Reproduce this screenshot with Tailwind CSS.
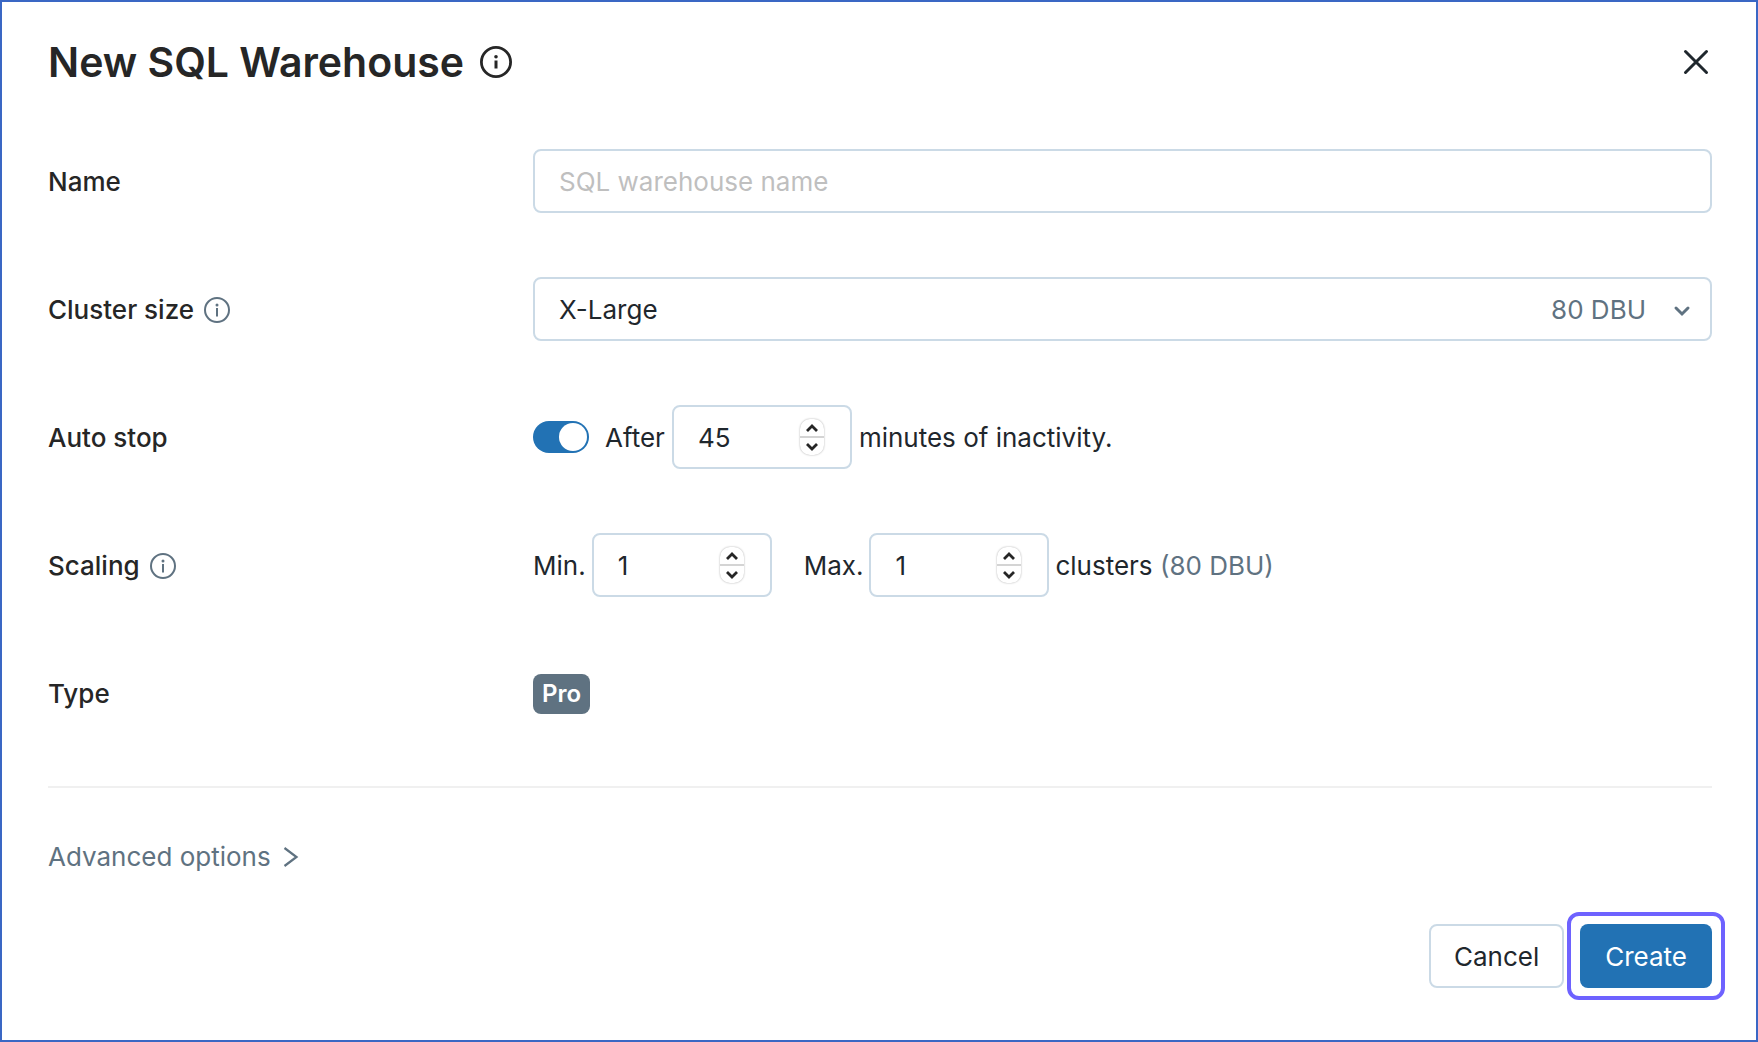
<!DOCTYPE html>
<html lang="en">
<head>
    <meta charset="utf-8">
    <meta name="viewport" content="width=device-width, initial-scale=1">
    <title>New SQL Warehouse</title>
    <script src="https://cdn.jsdelivr.net/npm/@tailwindcss/browser@4"></script>
</head>
<body class="bg-white font-['Inter',sans-serif] text-[26px] leading-10 text-[#1f272d]">
<main class="min-h-screen border-2 border-[#3a67c4] pt-8 pr-11 pb-[52px] pl-[46px]">
    <!-- Header -->
    <header class="flex items-center justify-between">
        <div class="flex items-center gap-4">
            <h1 class="text-[41px] leading-14 font-semibold text-[#262626]">New SQL Warehouse</h1>
            <button type="button" aria-label="About SQL warehouses" class="text-[#262626]">
                <svg class="size-8" viewBox="0 0 32 32" fill="none" stroke="currentColor">
                    <circle cx="16" cy="16" r="14.6" stroke-width="2.8"/>
                    <path d="M16 14.5v8" stroke-width="3"/>
                    <circle cx="16" cy="10.7" r="1.8" fill="currentColor" stroke="none"/>
                </svg>
            </button>
        </div>
        <button type="button" aria-label="Close">
            <svg class="size-8" viewBox="0 0 32 32" fill="none" stroke="currentColor" stroke-width="3" stroke-linecap="round">
                <path d="M5.500 5.500l21 21M26.500 5.500l-21 21"/>
            </svg>
        </button>
    </header>

    <form>
        <div class="mt-[59px] grid gap-16">
            <!-- Name -->
            <div class="grid h-16 grid-cols-[485px_1fr] items-center">
                <label for="name" class="pt-0.5 font-medium text-[#262626]">Name</label>
                <input id="name" type="text" placeholder="SQL warehouse name" class="h-16 w-full rounded-lg border-2 border-[#cbdae6] px-6 placeholder:text-[#bfbfbf]">
            </div>

            <!-- Cluster size -->
            <div class="grid h-16 grid-cols-[485px_1fr] items-center">
                <div class="flex items-center gap-2.5 pt-0.5">
                    <label for="size" class="font-medium text-[#262626]">Cluster size</label>
                    <button type="button" aria-label="About cluster size" class="text-[#5f7281]">
                        <svg class="size-[26px]" viewBox="0 0 26 26" fill="none" stroke="currentColor" stroke-width="2">
                            <circle cx="13" cy="13" r="12"/>
                            <path d="M13 11v8.500"/>
                            <circle cx="13" cy="8" r="1.500" fill="currentColor" stroke="none"/>
                        </svg>
                    </button>
                </div>
                <div class="relative">
                    <select id="size" class="block h-16 w-full appearance-none rounded-lg border-2 border-[#cbdae6] bg-white px-6 pt-0.5">
                        <option>X-Large</option>
                    </select>
                    <div class="pointer-events-none absolute inset-y-0 right-5 flex items-center gap-[26px] pt-0.5 text-[#5f7281]">
                        <span>80 DBU</span>
                        <svg class="size-5" viewBox="0 0 20 20" fill="none" stroke="currentColor" stroke-width="3" stroke-linecap="round">
                            <path d="M4 8l6 6 6-6"/>
                        </svg>
                    </div>
                </div>
            </div>

            <!-- Auto stop -->
            <div class="grid h-16 grid-cols-[485px_1fr] items-center">
                <label for="autostop" class="pt-0.5 font-medium text-[#262626]">Auto stop</label>
                <div class="flex items-center">
                    <input id="autostop" type="checkbox" role="switch" checked class="mr-4 flex h-8 w-14 appearance-none items-center justify-start rounded-full bg-[#8396a5] p-0.5 before:size-7 before:rounded-full before:bg-white checked:justify-end checked:bg-[#2272b4]">
                    <label for="minutes" class="pt-0.5">After</label>
                    <div class="relative mx-[7px]">
                        <input id="minutes" type="number" value="45" class="block h-16 w-[180px] appearance-none rounded-lg border-2 border-[#cbdae6] pr-14 pl-6 [-moz-appearance:textfield] [&::-webkit-inner-spin-button]:appearance-none">
                        <div class="absolute inset-y-0 right-7 flex items-center">
                            <div class="grid h-9 w-6 divide-y-2 divide-[#d4d4d4] rounded-[10px] bg-white text-[#262626] shadow-[0_0_2px_rgba(0,0,0,0.35)]">
                                <button type="button" aria-label="More minutes" class="flex items-center justify-center">
                                    <svg class="h-2 w-3" viewBox="0 0 12 8" fill="none" stroke="currentColor" stroke-width="2.800"><path d="M1 7l5-5 5 5"/></svg>
                                </button>
                                <button type="button" aria-label="Fewer minutes" class="flex items-center justify-center">
                                    <svg class="h-2 w-3" viewBox="0 0 12 8" fill="none" stroke="currentColor" stroke-width="2.800"><path d="M1 1l5 5 5-5"/></svg>
                                </button>
                            </div>
                        </div>
                    </div>
                    <span class="pt-0.5">minutes of inactivity.</span>
                </div>
            </div>

            <!-- Scaling -->
            <div class="grid h-16 grid-cols-[485px_1fr] items-center">
                <div class="flex items-center gap-2.5 pt-0.5">
                    <span class="font-medium text-[#262626]">Scaling</span>
                    <button type="button" aria-label="About scaling" class="text-[#5f7281]">
                        <svg class="size-[26px]" viewBox="0 0 26 26" fill="none" stroke="currentColor" stroke-width="2">
                            <circle cx="13" cy="13" r="12"/>
                            <path d="M13 11v8.500"/>
                            <circle cx="13" cy="8" r="1.500" fill="currentColor" stroke="none"/>
                        </svg>
                    </button>
                </div>
                <div class="flex items-center gap-1.5">
                    <label for="min" class="pt-0.5">Min.</label>
                    <div class="relative">
                        <input id="min" type="number" value="1" class="block h-16 w-[180px] appearance-none rounded-lg border-2 border-[#cbdae6] pr-14 pl-6 [-moz-appearance:textfield] [&::-webkit-inner-spin-button]:appearance-none">
                        <div class="absolute inset-y-0 right-7 flex items-center">
                            <div class="grid h-9 w-6 divide-y-2 divide-[#d4d4d4] rounded-[10px] bg-white text-[#262626] shadow-[0_0_2px_rgba(0,0,0,0.35)]">
                                <button type="button" aria-label="Raise minimum" class="flex items-center justify-center">
                                    <svg class="h-2 w-3" viewBox="0 0 12 8" fill="none" stroke="currentColor" stroke-width="2.800"><path d="M1 7l5-5 5 5"/></svg>
                                </button>
                                <button type="button" aria-label="Lower minimum" class="flex items-center justify-center">
                                    <svg class="h-2 w-3" viewBox="0 0 12 8" fill="none" stroke="currentColor" stroke-width="2.800"><path d="M1 1l5 5 5-5"/></svg>
                                </button>
                            </div>
                        </div>
                    </div>
                    <label for="max" class="ml-[26px] pt-0.5">Max.</label>
                    <div class="relative">
                        <input id="max" type="number" value="1" class="block h-16 w-[180px] appearance-none rounded-lg border-2 border-[#cbdae6] pr-14 pl-6 [-moz-appearance:textfield] [&::-webkit-inner-spin-button]:appearance-none">
                        <div class="absolute inset-y-0 right-7 flex items-center">
                            <div class="grid h-9 w-6 divide-y-2 divide-[#d4d4d4] rounded-[10px] bg-white text-[#262626] shadow-[0_0_2px_rgba(0,0,0,0.35)]">
                                <button type="button" aria-label="Raise maximum" class="flex items-center justify-center">
                                    <svg class="h-2 w-3" viewBox="0 0 12 8" fill="none" stroke="currentColor" stroke-width="2.800"><path d="M1 7l5-5 5 5"/></svg>
                                </button>
                                <button type="button" aria-label="Lower maximum" class="flex items-center justify-center">
                                    <svg class="h-2 w-3" viewBox="0 0 12 8" fill="none" stroke="currentColor" stroke-width="2.800"><path d="M1 1l5 5 5-5"/></svg>
                                </button>
                            </div>
                        </div>
                    </div>
                    <span class="pt-0.5">clusters <span class="text-[#5f7281]">(80 DBU)</span></span>
                </div>
            </div>

            <!-- Type -->
            <div class="grid h-16 grid-cols-[485px_1fr] items-center">
                <span class="pt-0.5 font-medium text-[#262626]">Type</span>
                <div class="flex pt-0.5">
                    <span class="rounded-lg bg-[#5f7281] px-[9px] text-2xl leading-10 font-semibold text-white">Pro</span>
                </div>
            </div>
        </div>

        <hr class="mt-[61px] border-t-2 border-[#f0f0f0]">

        <button type="button" class="mt-[49px] flex items-center gap-3 text-[#5f7281]">
            Advanced options
            <svg class="h-5 w-4" viewBox="0 0 16 20" fill="none" stroke="currentColor" stroke-width="2.200">
                <path d="M1.500 1l12 9-12 9"/>
            </svg>
        </button>

        <!-- Footer -->
        <div class="mt-[47px] flex justify-end gap-4">
            <button type="button" class="h-16 rounded-lg border-2 border-[#cbdae6] px-[23px] pt-0.5">Cancel</button>
            <button type="submit" class="relative h-16 rounded-lg bg-[#2272b4] px-[25px] pt-0.5 text-white">
                Create
                <!-- Focus ring -->
                <span class="pointer-events-none absolute -inset-x-[13px] -inset-y-3 rounded-xl border-4 border-[#6e62ff]"></span>
            </button>
        </div>
    </form>
</main>
</body>
</html>
